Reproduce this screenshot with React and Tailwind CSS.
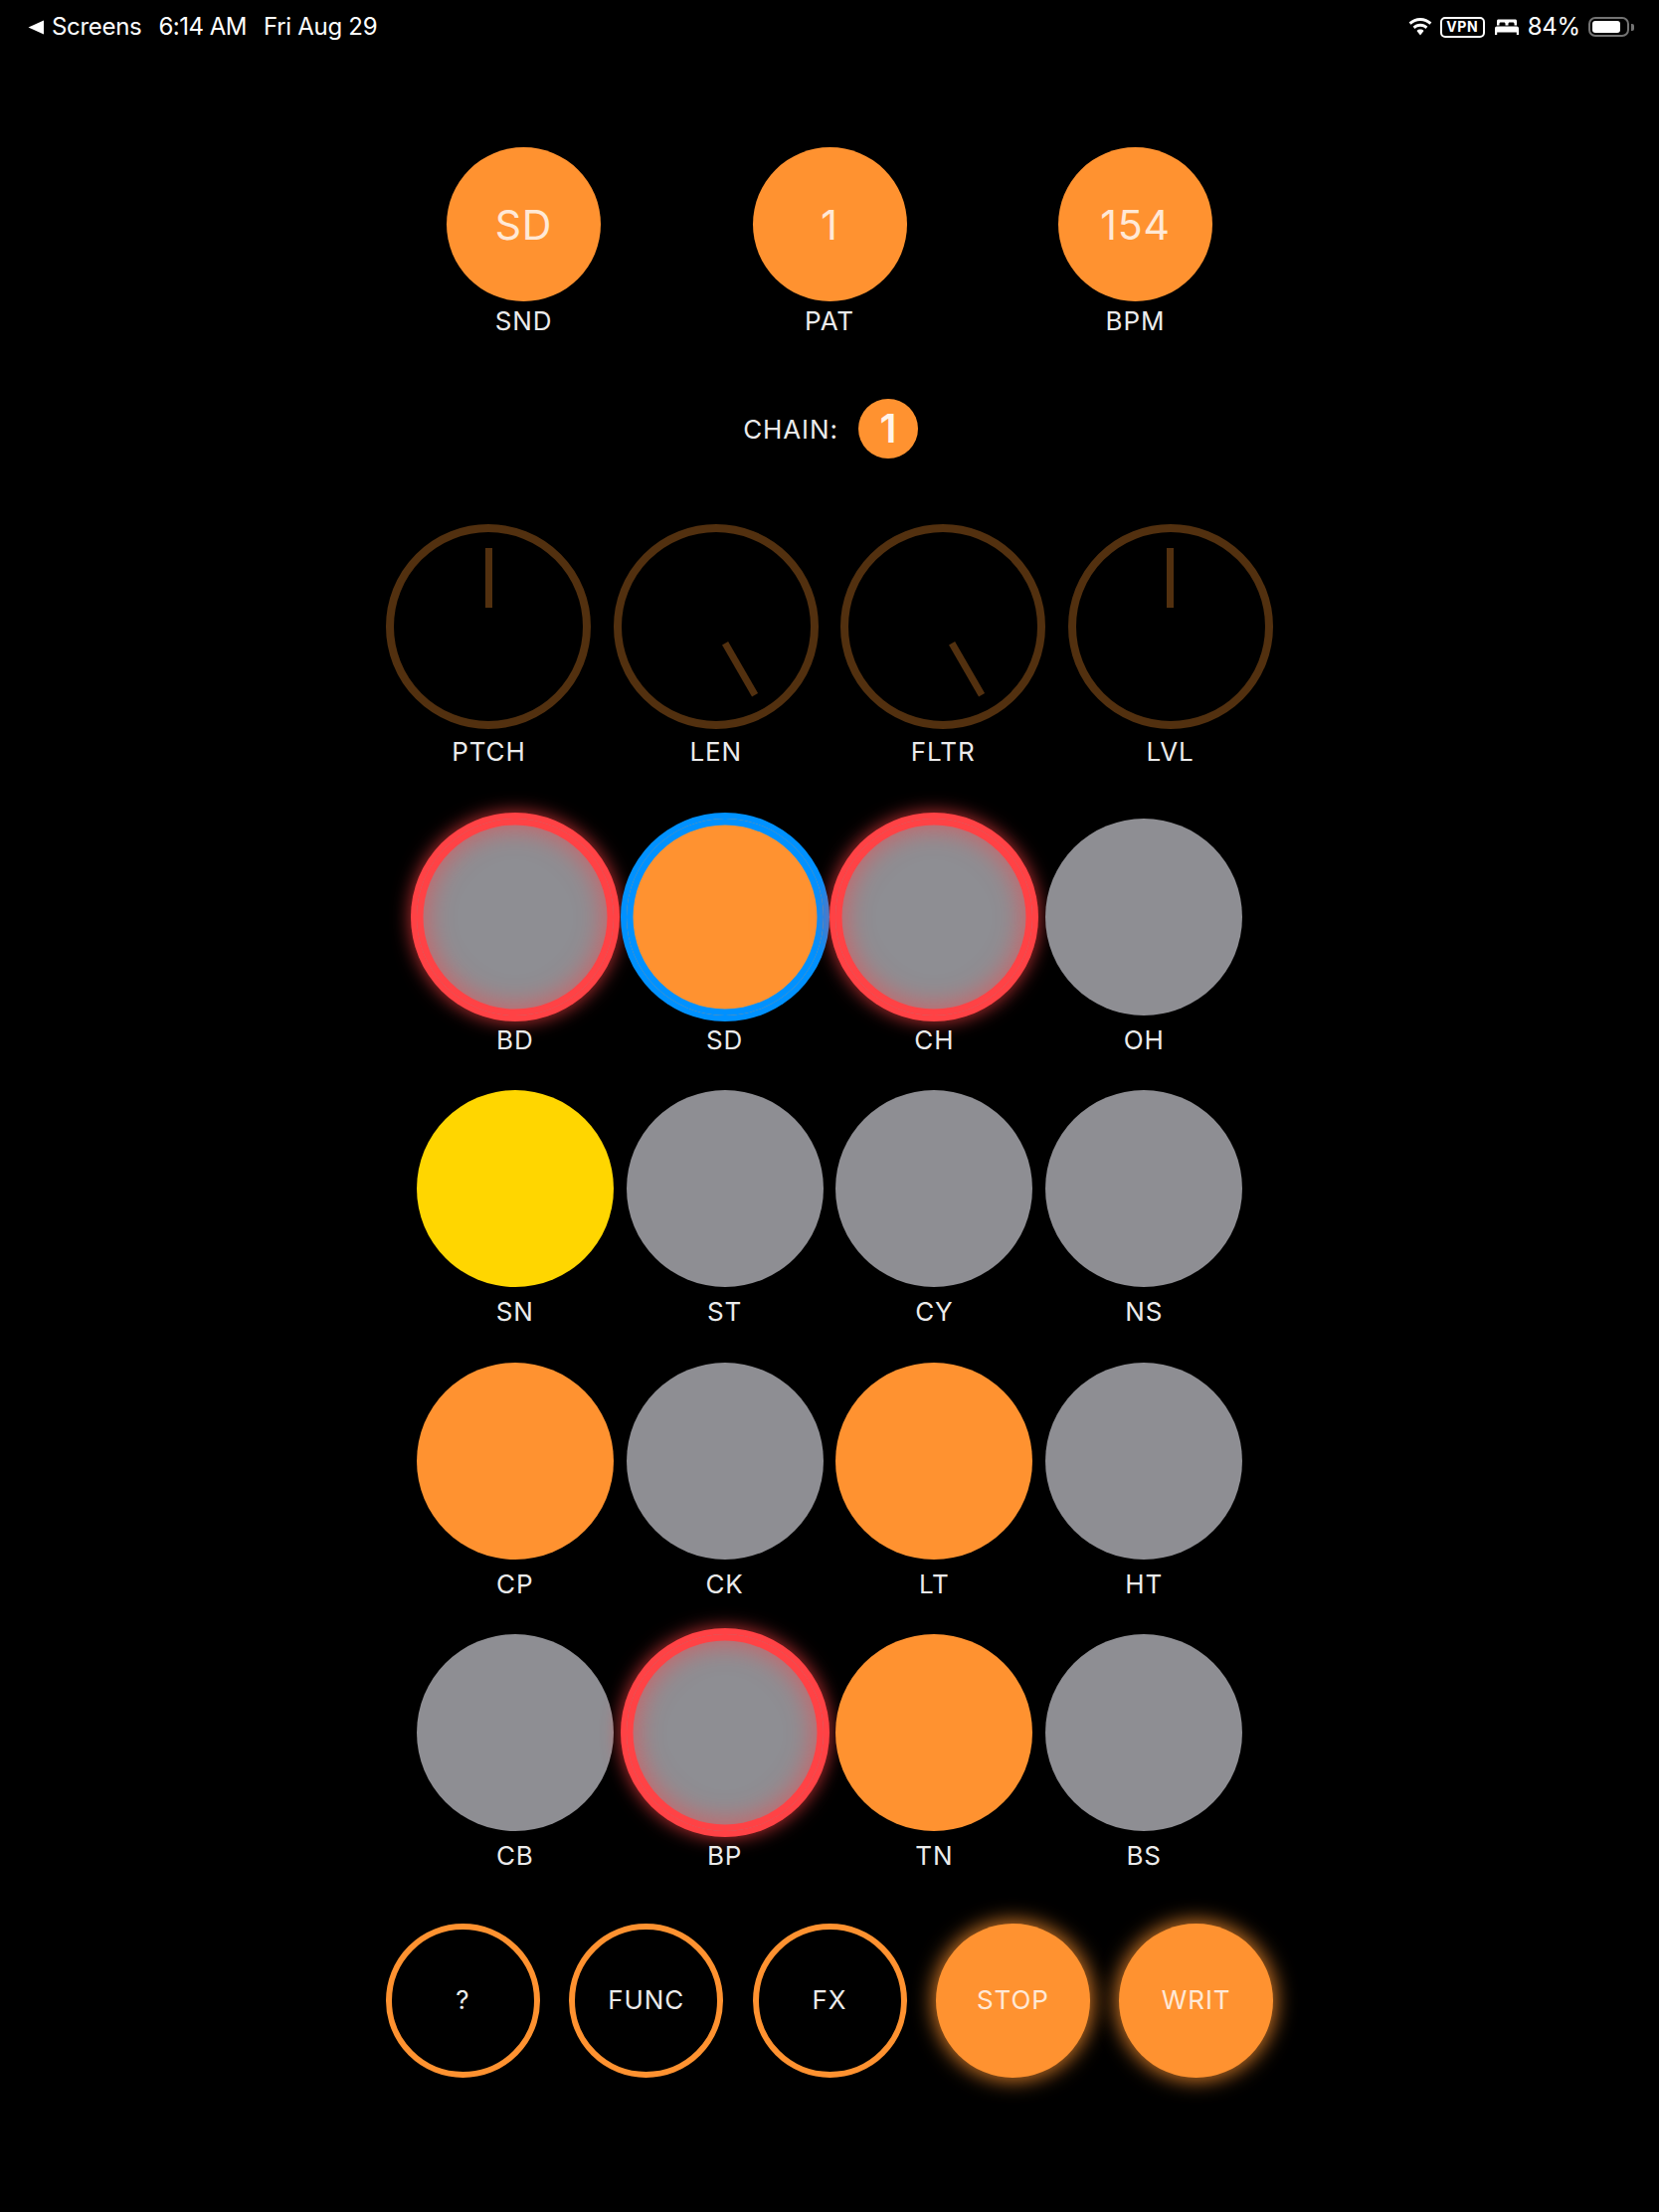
import React from 'react';

const pads = [
  { name: 'BD', kind: 'hit' }, { name: 'SD', kind: 'selected' }, { name: 'CH', kind: 'hit' }, { name: 'OH', kind: 'off' },
  { name: 'SN', kind: 'yellow' }, { name: 'ST', kind: 'off' }, { name: 'CY', kind: 'off' }, { name: 'NS', kind: 'off' },
  { name: 'CP', kind: 'on' }, { name: 'CK', kind: 'off' }, { name: 'LT', kind: 'on' }, { name: 'HT', kind: 'off' },
  { name: 'CB', kind: 'off' }, { name: 'BP', kind: 'hit' }, { name: 'TN', kind: 'on' }, { name: 'BS', kind: 'off' },
];

const padStyles = {
  off: 'bg-[#8e8e93]',
  on: 'bg-[#ff9230]',
  yellow: 'bg-[#ffd600]',
  selected: 'bg-[#ff9230] shadow-[0_0_0_6px_#0091ff,inset_0_0_0_6.5px_#0091ff]',
  hit: 'bg-[#8e8e93] shadow-[0_0_0_6px_#ff4245,0_0_18px_7px_rgba(255,66,69,0.7),inset_0_0_0_6.5px_#ff4245,inset_0_0_24px_11px_rgba(255,66,69,0.5)]',
};

const knobs = [
  { name: 'PTCH', turn: 'rotate-0' },
  { name: 'LEN', turn: 'rotate-[150deg]' },
  { name: 'FLTR', turn: 'rotate-[150deg]' },
  { name: 'LVL', turn: 'rotate-0' },
];

const actions = [
  { name: '?', lit: false },
  { name: 'FUNC', lit: false },
  { name: 'FX', lit: false },
  { name: 'STOP', lit: true },
  { name: 'WRIT', lit: true },
];

const StatusBar = () => (
  <div className="h-[54px] flex items-center justify-between pl-[28px] pr-[25px] text-[24px] text-white">
    <div className="flex items-center">
      <svg width="17" height="15" viewBox="0 0 17 15" className="mr-[7px]">
        <path d="M0.5 7.5 L16 0.5 V14.5 Z" fill="#fff" />
      </svg>
      <span className="tracking-[-0.3px]">Screens</span>
      <span className="ml-[17px] tracking-[-0.5px]">6:14 AM</span>
      <span className="ml-[17px] tracking-[-0.3px]">Fri Aug 29</span>
    </div>
    <div className="flex items-center">
      <svg width="24" height="18" viewBox="0 0 24 18">
        <path d="M12 0C7.6 0 3.6 1.7.6 4.6L2.6 6.7C5 4.3 8.4 2.9 12 2.9s7 1.4 9.4 3.8l2-2.1C20.4 1.7 16.4 0 12 0Z" fill="#fff" />
        <path d="M12 5.8c-2.9 0-5.5 1.1-7.4 3l2 2.1c1.4-1.4 3.3-2.2 5.4-2.2s4 .8 5.4 2.2l2-2.1c-1.9-1.9-4.5-3-7.4-3Z" fill="#fff" />
        <path d="M12 11.5c-1.4 0-2.6.5-3.5 1.4L12 17.5l3.5-4.6c-.9-.9-2.1-1.4-3.5-1.4Z" fill="#fff" />
      </svg>
      <div className="ml-[8px] w-[45px] h-[21px] border-2 border-white rounded-[5px] flex items-center justify-center text-[14px] font-bold tracking-[0.6px] leading-none">VPN</div>
      <svg width="24" height="16" viewBox="0 0 24 16" className="ml-[10px]">
        <path d="M3.5 0.5h17c.8 0 1.5.7 1.5 1.5v4.5h-2.5V5c0-.8-.6-1.4-1.4-1.4h-3.2c-.8 0-1.4.6-1.4 1.4v1.5h-3V5c0-.8-.6-1.4-1.4-1.4H5.9C5.100 3.600 4.500 4.200 4.500 5v1.500H2V2c0-.8.7-1.500 1.500-1.500Z" fill="#fff" />
        <path d="M2 7.500h20c1.100 0 2 .9 2 2V16h-2.200v-2.500H2.200V16H0V9.500c0-1.100.9-2 2-2Z" fill="#fff" />
      </svg>
      <span className="ml-[9px] tracking-[-0.2px]">84%</span>
      <div className="ml-[8px] w-[41px] h-[20px] border-2 border-white/45 rounded-[7px] p-[2px]">
        <div className="w-[84%] h-full bg-white rounded-[3px]" />
      </div>
      <div className="ml-[2px] w-[3px] h-[7px] bg-white/45 rounded-r-[2px]" />
    </div>
  </div>
);

const Label = ({ children, className = '' }) => (
  <div className={`h-[30px] leading-[30px] text-[26px] text-center text-[#ebebeb] tracking-[0.9px] ${className}`}>{children}</div>
);

const TopDial = ({ value, name }) => (
  <div className="w-[155px] flex flex-col items-center">
    <div className="w-[155px] h-[155px] rounded-full bg-[#ff9230] flex items-center justify-center pt-[2px] text-[41px] text-white/80 tracking-[0.8px]">{value}</div>
    <Label className="mt-[5px]">{name}</Label>
  </div>
);

const Knob = ({ name, turn }) => (
  <div className="w-[206px]">
    <div className="w-[206px] h-[206px] rounded-full border-[8px] border-[#52300f]">
      <div className={`w-full h-full flex justify-center pt-[16px] ${turn}`}>
        <div className="w-[7px] h-[60px] bg-[#52300f]" />
      </div>
    </div>
    <Label className="mt-[8px]">{name}</Label>
  </div>
);

const Pad = ({ name, kind }) => (
  <div className="w-[198px]">
    <div className={`w-[198px] h-[198px] rounded-full ${padStyles[kind]}`} />
    <Label className="mt-[10px]">{name}</Label>
  </div>
);

const ActionButton = ({ name, lit }) => (
  <div
    className={`w-[155px] h-[155px] rounded-full flex items-center justify-center pb-[1px] text-[26px] tracking-[0.9px] ${
      lit
        ? 'bg-[#ff9230] text-white/80 shadow-[0_0_20px_3px_rgba(255,146,48,0.8)]'
        : 'border-[6px] border-[#ff9230] text-[#ebebeb]'
    }`}
  >
    {name}
  </div>
);

export default function App() {
  return (
    <div className="w-full h-[2224px] bg-black overflow-hidden font-['Inter',sans-serif]">
      <StatusBar />

      <div className="mt-[94px] flex justify-center gap-[152.5px]">
        <TopDial value="SD" name="SND" />
        <TopDial value="1" name="PAT" />
        <TopDial value="154" name="BPM" />
      </div>

      <div className="mt-[63px] flex items-center justify-center gap-[20px] pl-[2px]">
        <span className="text-[26px] text-[#ebebeb] tracking-[0.9px]">CHAIN:</span>
        <div className="w-[60px] h-[60px] rounded-full bg-[#ff9230] flex items-center justify-center text-[40px] font-semibold text-white/90">1</div>
      </div>

      <div className="mt-[66px] flex justify-center gap-[22.4px]">
        {knobs.map(k => <Knob key={k.name} name={k.name} turn={k.turn} />)}
      </div>

      <div className="mt-[52px] grid grid-cols-[repeat(4,198px)] justify-center gap-x-[12.8px] gap-y-[35.3px]">
        {pads.map(p => <Pad key={p.name} name={p.name} kind={p.kind} />)}
      </div>

      <div className="mt-[53px] flex justify-center gap-[29.3px]">
        {actions.map(a => <ActionButton key={a.name} name={a.name} lit={a.lit} />)}
      </div>
    </div>
  );
}
